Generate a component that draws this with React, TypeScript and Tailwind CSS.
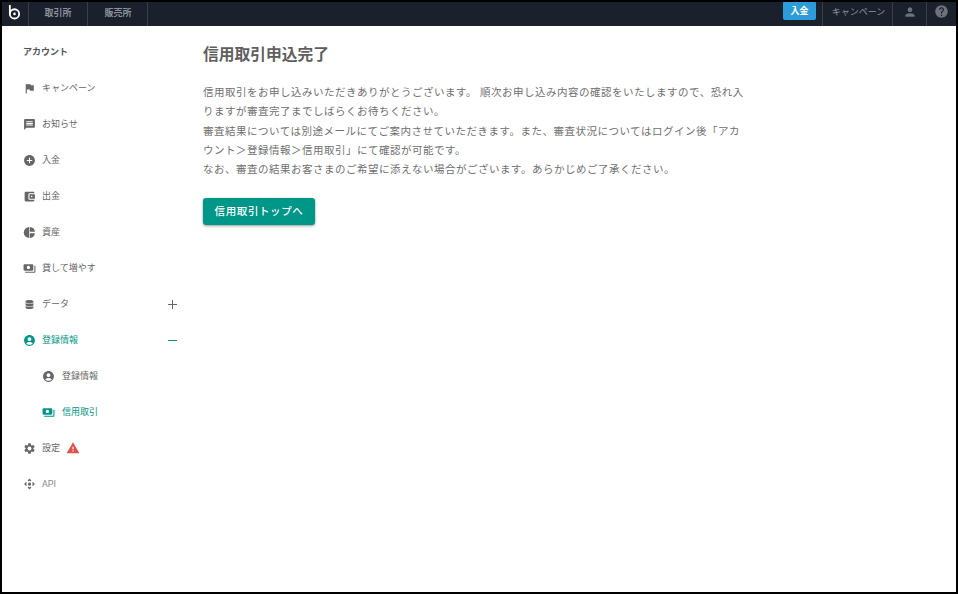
import React from "react";
import { MdFlag, MdMessage, MdAddCircle, MdAccountBalanceWallet, MdPayments, MdAccountCircle, MdSettings, MdWarning, MdControlCamera, MdPerson, MdHelp } from "react-icons/md";
import { FaDatabase } from "react-icons/fa";

const Pie = () => (
  <svg viewBox="0 0 24 24" width="13" height="13" fill="currentColor">
    <path d="M11.4 2A10 10 0 0 0 11.4 22z" />
    <path d="M12.6 2V10.6H22A10 10 0 0 0 12.6 2z" />
    <path d="M12.6 13.4V22A10 10 0 0 0 22 13.4H12.6z" />
  </svg>
);

const Plus = () => (
  <svg viewBox="0 0 9 9" width="9" height="9" stroke="currentColor" strokeWidth="1">
    <path d="M0 4.5h9M4.5 0v9" />
  </svg>
);
const Minus = () => (
  <svg viewBox="0 0 9 9" width="9" height="9" stroke="currentColor" strokeWidth="1">
    <path d="M0 4.5h9" />
  </svg>
);

function Row({ icon, label, active, sub, right, muted }: { icon: React.ReactNode; label: React.ReactNode; active?: boolean; sub?: boolean; right?: React.ReactNode; muted?: boolean }) {
  return (
    <div className={`flex h-9 items-center ${sub ? "pl-10" : "pl-[21px]"} pr-[11px] ${active ? "text-[#009688]" : "text-[#666]"}`}>
      <span className="flex w-[13px] shrink-0 items-center justify-center">{icon}</span>
      <span className={`${sub ? "ml-[7px]" : "ml-[6px]"} flex items-center text-[9px] leading-none ${muted ? "text-[#8a8a8a]" : ""}`}>{label}</span>
      {right && <span className="ml-auto flex items-center">{right}</span>}
    </div>
  );
}

export default function App() {
  return (
    <div className="flex h-[594px] w-[958px] flex-col border-2 border-black bg-white font-['Roboto','Noto_Sans_CJK_JP',sans-serif]">
      <header className="flex h-6 shrink-0 items-stretch bg-[#1a202c] text-[9px] text-[#8d939c]">
        <div className="flex w-[26px] items-center justify-center pb-[4px] pr-[1px] text-white">
          <svg viewBox="0 0 14 16" width="13" height="15" fill="none" stroke="currentColor" strokeWidth="2">
            <path d="M2 0v9" />
            <circle cx="7" cy="9.5" r="5" />
            <circle cx="7" cy="9.5" r="1.4" fill="currentColor" stroke="none" />
          </svg>
        </div>
        <div className="flex w-[60px] items-center justify-center border-x border-[#3a404a] pb-[1px] font-bold">取引所</div>
        <div className="flex w-[60px] items-center justify-center border-r border-[#3a404a] pb-[1px] pl-[1px] font-bold">販売所</div>
        <div className="ml-auto flex items-stretch">
          <div className="mb-[6px] flex w-[33px] items-center justify-center rounded-b-[2px] rounded-t-[1px] bg-[#2d9cdb] pt-[1px] font-bold text-white">入金</div>
          <div className="ml-[6px] flex w-[70px] items-center justify-center border-l border-[#3a404a] pb-[3px] pl-[2px]">キャンペーン</div>
          <div className="flex w-[34px] items-center justify-center border-l border-[#3a404a] pb-[5px]"><MdPerson size={14} color="#6d7278" /></div>
          <div className="flex w-[30px] items-center justify-center border-l border-[#3a404a] pb-[5px]"><MdHelp size={15} color="#6d7278" /></div>
        </div>
      </header>
      <div className="flex min-h-0 flex-1">
        <aside className="w-[186px] shrink-0 pt-[20px]">
          <div className="mb-[11px] h-[13px] pl-[21px] text-[9px] font-bold leading-[13px] text-[#555]">アカウント</div>
          <Row icon={<MdFlag size={13} />} label="キャンペーン" />
          <Row icon={<MdMessage size={13} />} label="お知らせ" />
          <Row icon={<MdAddCircle size={13} />} label="入金" />
          <Row icon={<MdAccountBalanceWallet size={13} />} label="出金" />
          <Row icon={<Pie />} label="資産" />
          <Row icon={<MdPayments size={13} />} label="貸して増やす" />
          <Row icon={<FaDatabase size={9} />} label="データ" right={<Plus />} />
          <Row active icon={<MdAccountCircle size={13} />} label="登録情報" right={<Minus />} />
          <Row sub icon={<MdAccountCircle size={13} />} label="登録情報" />
          <Row sub active icon={<MdPayments size={13} />} label="信用取引" />
          <Row icon={<MdSettings size={13} />} label={<>設定<MdWarning size={14} color="#e0524a" className="ml-[6px]" /></>} />
          <Row muted icon={<MdControlCamera size={14} />} label="API" />
        </aside>
        <main className="flex-1 pl-[15px] pt-[18px] text-[#707070]">
          <h1 className="text-[15.75px] font-bold leading-[22px] text-[#5f5f5f]">信用取引申込完了</h1>
          <p className="mt-[17px] w-[545px] text-[10.5px] leading-[19.25px] tracking-[0.5px]">
            信用取引をお申し込みいただきありがとうございます。 順次お申し込み内容の確認をいたしますので、恐れ入りますが審査完了までしばらくお待ちください。<br />
            審査結果については別途メールにてご案内させていただきます。また、審査状況についてはログイン後「アカウント＞登録情報＞信用取引」にて確認が可能です。<br />
            なお、審査の結果お客さまのご希望に添えない場合がございます。あらかじめご了承ください。
          </p>
          <button className="mt-[19px] flex h-[27px] w-[112px] items-center justify-center rounded-[3px] bg-[#009688] text-[10.5px] font-medium tracking-[0.6px] text-white shadow-[0_1px_3px_rgba(0,0,0,0.4)]">信用取引トップへ</button>
        </main>
      </div>
    </div>
  );
}
